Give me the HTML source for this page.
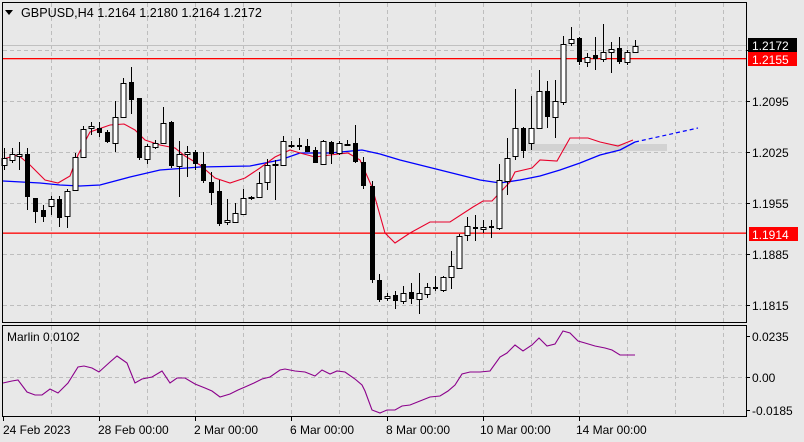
<!DOCTYPE html>
<html><head><meta charset="utf-8"><style>
html,body{margin:0;padding:0;background:#e8e8e8;width:804px;height:442px;overflow:hidden}
svg{display:block}
text{font-family:"Liberation Sans",sans-serif;font-size:12px;fill:#000}
</style></head><body>
<svg width="804" height="442" viewBox="0 0 804 442" xmlns="http://www.w3.org/2000/svg">
<rect width="804" height="442" fill="#e8e8e8"/>
<g stroke="#bdbdbd" stroke-dasharray="4,3" stroke-width="1">
<path d="M51.5 3V322M99.5 3V322M147.5 3V322M195.5 3V322M243.5 3V322M291.5 3V322M339.5 3V322M387.5 3V322M435.5 3V322M483.5 3V322M531.5 3V322M579.5 3V322M627.5 3V322M675.5 3V322M723.5 3V322"/>
<path d="M3 50.5H746M3 101.5H746M3 152.5H746M3 203.5H746M3 254.5H746M3 305.5H746"/>
<path d="M51.5 326V416M99.5 326V416M147.5 326V416M195.5 326V416M243.5 326V416M291.5 326V416M339.5 326V416M387.5 326V416M435.5 326V416M483.5 326V416M531.5 326V416M579.5 326V416M627.5 326V416M675.5 326V416M723.5 326V416"/>
<path d="M3 377.5H746"/>
</g>
<rect x="3" y="45" width="743" height="1" fill="#c0c0c0"/>
<rect x="527" y="144" width="140" height="7" fill="#d2d2d2"/>
<rect x="3" y="58" width="743" height="1.3" fill="#ff0000"/>
<rect x="3" y="232.5" width="743" height="1.3" fill="#ff0000"/>
<polyline fill="none" stroke="#0000ff" stroke-width="1.3" points="3,181 40,183 60,185 80,186 100,185 130,177 160,170 200,167 250,166 280,160 300,153 330,153 362,150 380,154 400,160 420,165 440,170 460,175 480,180 500,183 520,180 540,176 560,170 580,163 600,155 620,150 635,142"/>
<path d="M635 142L698 128" stroke="#0000ff" stroke-dasharray="4,3" stroke-width="1.2"/>
<polyline fill="none" stroke="#e8002a" stroke-width="1.1" points="3,159 18,155 30,165 45,180 58,183 70,176 78,155 90,132 110,125 124,124 135,130 145,140 160,145 175,148 185,156 200,165 215,178 230,183 245,178 260,168 275,157 290,150 300,153 315,157 330,155 348,153 360,160 372,187 385,233 395,243 410,233 430,222 450,222 473,207 483,201 492,201 510,182 515,172 532,168 540,160 557,161 570,138 588,138 600,142 618,146 633,140"/>
<path stroke="#000" fill="none" d="M4.5 148V170M12.5 148V163M19.5 142V170M27.5 148V210M35.5 198V223M43.5 205V222M51.5 196V215M59.5 196V227M67.5 189V228M75.5 153V190M83.5 126V157M91.5 122V135M99.5 122V137M107.5 130V143M115.5 101V152M123.5 78V118M131.5 67V114M139.5 98V160M147.5 144V164M155.5 140V149M163.5 107V143M171.5 121V168M179.5 141V197M187.5 146V177M195.5 150V170M203.5 152V183M211.5 172V205M219.5 180V226M227.5 199V225M235.5 203V221M243.5 189V213M251.5 196V200M259.5 172V191M267.5 159V190M275.5 160V200M283.5 136V165M291.5 141V148M299.5 138V150M307.5 139V152M315.5 147V163M323.5 140V165M331.5 141V164M339.5 141V155M347.5 140V146M355.5 125V163M363.5 157V189M372.5 181V283M379.5 274V302M387.5 293V301M395.5 291V309M403.5 286V304M411.5 283V304M419.5 273V314M427.5 283V298M435.5 276V291M443.5 276V292M451.5 251V289M459.5 234V269M467.5 217V241M475.5 215V241M483.5 220V233M491.5 220V238M499.5 164V230M507.5 138V195M515.5 89V160M523.5 127V158M531.5 96V150M539.5 70V128M547.5 81V128M555.5 80V138M563.5 36V105M571.5 27V46M579.5 37V65M587.5 53V67M595.5 37V70M603.5 24V62M611.5 42V73M619.5 37V64M627.5 50V65M635.5 40V52"/>
<g fill="#000">
<rect x="25" y="154" width="5" height="43"/><rect x="33" y="198" width="5" height="14"/><rect x="41" y="210" width="5" height="7"/><rect x="57" y="199" width="5" height="19"/><rect x="97" y="128" width="5" height="5"/><rect x="105" y="132" width="5" height="10"/><rect x="129" y="82" width="5" height="18"/><rect x="137" y="98" width="5" height="60"/><rect x="169" y="122" width="5" height="44"/><rect x="193" y="152" width="5" height="12"/><rect x="201" y="164" width="5" height="17"/><rect x="209" y="182" width="5" height="11"/><rect x="217" y="191" width="5" height="33"/><rect x="297" y="145" width="5" height="2"/><rect x="305" y="146" width="5" height="6"/><rect x="313" y="150" width="5" height="13"/><rect x="329" y="142" width="5" height="12"/><rect x="353" y="143" width="5" height="19"/><rect x="361" y="162" width="5" height="24"/><rect x="370" y="186" width="5" height="94"/><rect x="377" y="280" width="5" height="20"/><rect x="393" y="295" width="5" height="6"/><rect x="409" y="292" width="5" height="7"/><rect x="433" y="287" width="5" height="2"/><rect x="473" y="227" width="5" height="2"/><rect x="489" y="226" width="5" height="2"/><rect x="521" y="128" width="5" height="23"/><rect x="545" y="91" width="5" height="26"/><rect x="577" y="38" width="5" height="24"/><rect x="593" y="55" width="5" height="4"/><rect x="617" y="48" width="5" height="14"/>
</g>
<g fill="#fff" stroke="#000">
<rect x="2" y="158.5" width="5" height="7"/><rect x="10" y="154.5" width="5" height="6"/><rect x="17" y="154.5" width="5" height="2"/><rect x="49" y="199.5" width="5" height="7"/><rect x="65" y="191.5" width="5" height="25"/><rect x="73" y="157.5" width="5" height="33"/><rect x="81" y="129.5" width="5" height="28"/><rect x="89" y="126.5" width="5" height="2"/><rect x="113" y="117.5" width="5" height="26"/><rect x="121" y="83.5" width="5" height="34"/><rect x="145" y="146.5" width="5" height="13"/><rect x="153" y="143.5" width="5" height="4"/><rect x="161" y="123.5" width="5" height="20"/><rect x="177" y="154.5" width="5" height="12"/><rect x="185" y="152.5" width="5" height="2"/><rect x="225" y="220.5" width="5" height="2"/><rect x="233" y="213.5" width="5" height="9"/><rect x="241" y="198.5" width="5" height="16"/><rect x="249" y="197.5" width="5" height="1"/><rect x="257" y="183.5" width="5" height="14"/><rect x="265" y="165.5" width="5" height="17"/><rect x="273" y="164.5" width="5" height="1"/><rect x="281" y="141.5" width="5" height="24"/><rect x="289" y="145.5" width="5" height="1"/><rect x="321" y="141.5" width="5" height="23"/><rect x="337" y="143.5" width="5" height="10"/><rect x="345" y="144.5" width="5" height="1"/><rect x="385" y="296.5" width="5" height="2"/><rect x="401" y="293.5" width="5" height="8"/><rect x="417" y="293.5" width="5" height="6"/><rect x="425" y="287.5" width="5" height="7"/><rect x="441" y="277.5" width="5" height="13"/><rect x="449" y="266.5" width="5" height="11"/><rect x="457" y="236.5" width="5" height="32"/><rect x="465" y="226.5" width="5" height="9"/><rect x="481" y="227.5" width="5" height="2"/><rect x="497" y="180.5" width="5" height="48"/><rect x="505" y="158.5" width="5" height="23"/><rect x="513" y="128.5" width="5" height="28"/><rect x="529" y="128.5" width="5" height="15"/><rect x="537" y="91.5" width="5" height="37"/><rect x="553" y="101.5" width="5" height="16"/><rect x="561" y="44.5" width="5" height="58"/><rect x="569" y="39.5" width="5" height="4"/><rect x="585" y="57.5" width="5" height="5"/><rect x="601" y="52.5" width="5" height="7"/><rect x="609" y="49.5" width="5" height="3"/><rect x="625" y="52.5" width="5" height="10"/><rect x="633" y="46.5" width="5" height="6"/>
</g>
<polyline fill="none" stroke="#8b008b" stroke-width="1.1" points="3,383 12,381 18,380 27,392 35,395 42,395 50,389 58,393 68,383 78,367 84,366 92,368 99,372 110,362 117,356 127,363 135,383 142,379 152,377 162,371 170,383 177,378 185,378 195,384 205,388 212,391 220,397 230,394 238,390 245,387 254,383 262,379 270,377 280,370 285,369 295,371 305,372 315,376 322,370 330,374 337,371 345,372 355,379 362,385 365,391 372,410 380,413 387,410 395,410 402,406 410,405 420,401 430,397 440,396 448,391 455,385 462,374 470,372 480,372 490,371 500,357 507,353 515,345 523,351 532,345 539,338 547,346 555,344 563,331 570,333 578,341 585,343 595,346 605,348 612,350 620,355 635,355"/>
<rect x="2.5" y="2.5" width="744" height="320" fill="none" stroke="#000"/>
<rect x="2.5" y="325.5" width="744" height="91" fill="none" stroke="#000"/>
<path stroke="#000" d="M747 50.5h3M747 101.5h3M747 152.5h3M747 203.5h3M747 254.5h3M747 305.5h3M747 336.5h3M747 377.5h3M747 410.5h3M3.5 417v4M99.5 417v4M195.5 417v4M291.5 417v4M387.5 417v4M483.5 417v4M579.5 417v4"/>
<path d="M5 10h8l-4 5z" fill="#000"/>
<text x="21" y="17" style="font-size:12.6px">GBPUSD,H4  1.2164 1.2180 1.2164 1.2172</text>
<text x="7" y="341">Marlin 0.0102</text>
<text x="752" y="106">1.2095</text>
<text x="752" y="157">1.2025</text>
<text x="752" y="208">1.1955</text>
<text x="752" y="259">1.1885</text>
<text x="752" y="310">1.1815</text>
<rect x="748" y="38" width="49" height="14" fill="#000"/>
<text x="752" y="50" style="fill:#fff">1.2172</text>
<rect x="748" y="52" width="49" height="14" fill="#ff0000"/>
<text x="752" y="64" style="fill:#fff">1.2155</text>
<rect x="749" y="227" width="49" height="14" fill="#ff0000"/>
<text x="752" y="239" style="fill:#fff">1.1914</text>
<text x="752" y="341">0.0235</text>
<text x="752" y="382">0.00</text>
<text x="752" y="415">-0.0185</text>
<text x="3" y="434">24 Feb 2023</text>
<text x="98" y="434">28 Feb 00:00</text>
<text x="194" y="434">2 Mar 00:00</text>
<text x="290" y="434">6 Mar 00:00</text>
<text x="386" y="434">8 Mar 00:00</text>
<text x="480" y="434">10 Mar 00:00</text>
<text x="576" y="434">14 Mar 00:00</text>
</svg>
</body></html>
